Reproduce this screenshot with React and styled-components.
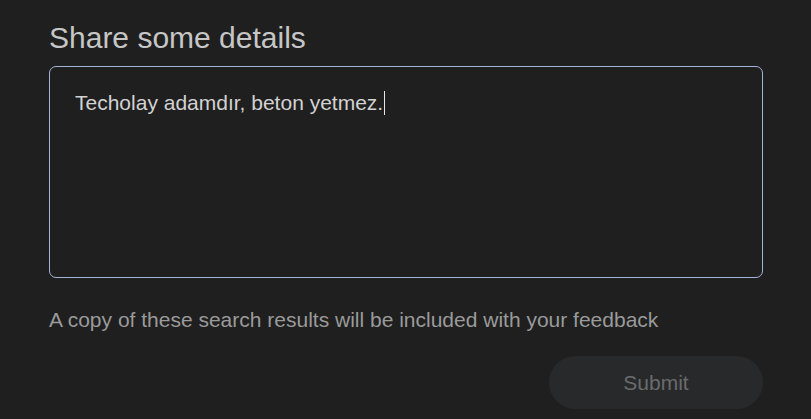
import React from 'react';
import styled, { createGlobalStyle } from 'styled-components';

const GlobalStyle = createGlobalStyle`
    html, body {
        margin: 0;
        padding: 0;
        background-color: #1f1f1f;
    }

    body {
        font-family: 'Liberation Sans', Arial, sans-serif;
    }
`;

const Panel = styled.div`
    width: 811px;
    height: 419px;
    box-sizing: border-box;
    padding: 20px 48px 0 49px;
    display: flex;
    flex-direction: column;
    background-color: #1f1f1f;
`;

const Title = styled.h2`
    margin: 0 0 10px 0;
    font-weight: 400;
    font-size: 30px;
    line-height: 36px;
    color: #c6c6c6;
`;

const Field = styled.div`
    box-sizing: border-box;
    height: 212px;
    padding: 22px 25px;
    border: 1px solid #a3b5d6;
    border-radius: 7px;
    font-size: 21px;
    line-height: 28px;
    color: #d2d2d2;
`;

const Caret = styled.span`
    display: inline-block;
    width: 1px;
    height: 24px;
    margin-left: 1px;
    vertical-align: -5px;
    background-color: #e6e6e6;
`;

const Note = styled.p`
    margin: 28px 0 0 0;
    font-size: 21px;
    line-height: 28px;
    color: #9a9a9a;
`;

const Actions = styled.div`
    display: flex;
    justify-content: flex-end;
    margin-top: 22px;
`;

const Button = styled.button`
    width: 214px;
    height: 53px;
    border: none;
    border-radius: 27px;
    background-color: #28292a;
    color: #6a6b6c;
    font-family: 'Liberation Sans', Arial, sans-serif;
    font-size: 21px;
    cursor: default;
`;

const App = () => {
    return (
        <>
            <GlobalStyle />
            <Panel>
                <Title>Share some details</Title>

                <Field>
                    Techolay adamdır, beton yetmez.<Caret />
                </Field>

                <Note>A copy of these search results will be included with your feedback</Note>

                <Actions>
                    <Button disabled>Submit</Button>
                </Actions>
            </Panel>
        </>
    )
}

export default App;
